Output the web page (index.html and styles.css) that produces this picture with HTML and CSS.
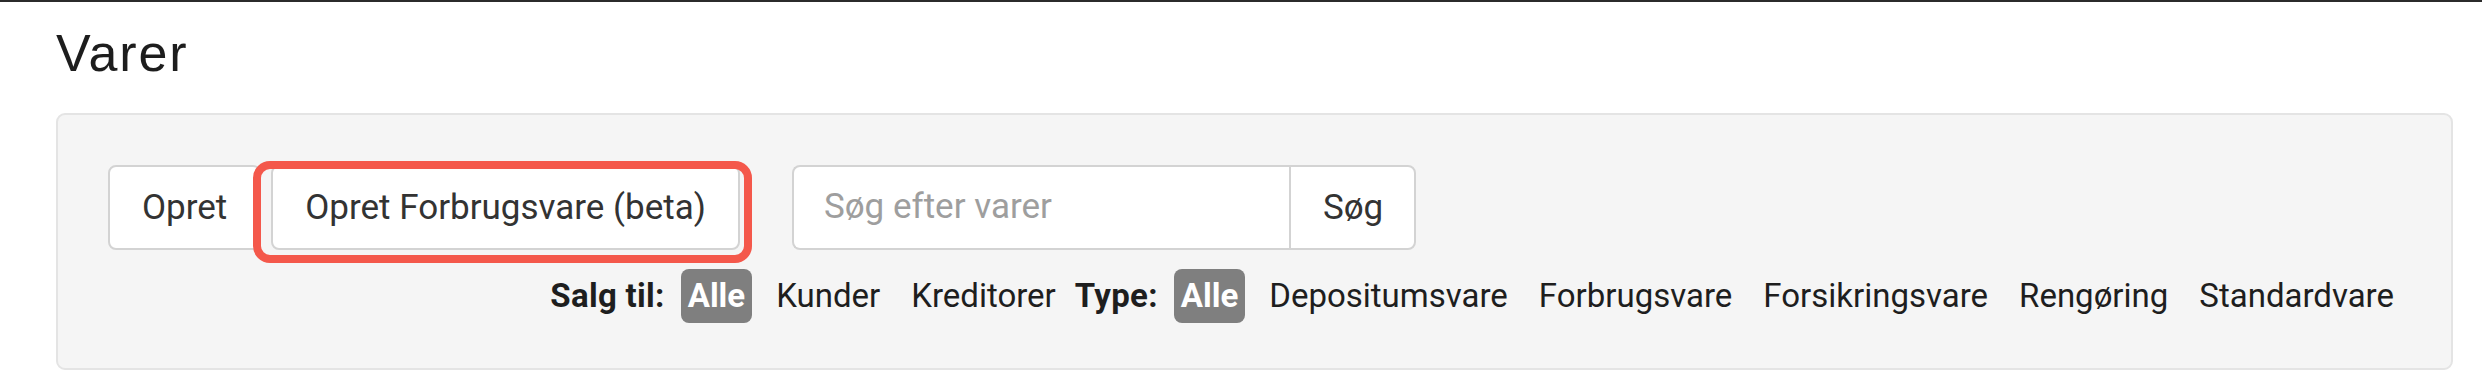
FILE: index.html
```html
<!DOCTYPE html>
<html lang="da">
<head>
<meta charset="utf-8">
<title>Varer</title>
<link rel="stylesheet" href="styles.css">
</head>
<body>
<div class="topbar"></div>
<main class="page">
  <h1 class="title">Varer</h1>
  <section class="well">
    <div class="toolbar">
      <div class="btn-group">
        <button class="btn">Opret</button>
        <div class="btn-wrap">
          <button class="btn btn-beta">Opret Forbrugsvare (beta)</button>
          <span class="highlight"></span>
        </div>
      </div>
      <form class="search">
        <input class="search-input" type="text" placeholder="Søg efter varer">
        <button class="search-btn" type="button">Søg</button>
      </form>
    </div>
    <div class="filters">
      <div class="fgroup">
        <span class="flabel">Salg til:</span>
        <a class="fitem active">Alle</a>
        <a class="fitem">Kunder</a>
        <a class="fitem">Kreditorer</a>
      </div>
      <div class="fgroup">
        <span class="flabel">Type:</span>
        <a class="fitem active">Alle</a>
        <a class="fitem">Depositumsvare</a>
        <a class="fitem">Forbrugsvare</a>
        <a class="fitem">Forsikringsvare</a>
        <a class="fitem">Rengøring</a>
        <a class="fitem">Standardvare</a>
      </div>
    </div>
  </section>
</main>
</body>
</html>
```
FILE: styles.css
```css
* { box-sizing: border-box; }
html, body { margin: 0; padding: 0; background: #ffffff; }
body { font-family: Roboto, "Liberation Sans", Arial, sans-serif; color: #333; }

.topbar { height: 2px; background: #2b2b2b; }

.page { padding-left: 56px; width: 2453px; }

.title {
  margin: 21px 0 30px 0;
  font-family: "Liberation Sans", Arial, sans-serif;
  font-weight: 400;
  font-size: 52px;
  line-height: 60px;
  letter-spacing: 1.8px;
  color: #1d1d1d;
}

.well {
  background: #f5f5f5;
  border: 2px solid #e4e4e4;
  border-radius: 9px;
  padding: 50px 50px 45px 50px;
}

.toolbar { display: flex; align-items: stretch; height: 85px; }

.btn-group { display: flex; gap: 10px; }
.btn-wrap { position: relative; display: flex; }

.btn {
  font-family: Roboto, sans-serif;
  font-size: 35px;
  line-height: 79px;
  color: #333;
  background: #fff;
  border: 2px solid #d3d3d3;
  border-radius: 8px;
  padding: 0 32px;
  height: 85px;
  margin: 0;
  white-space: nowrap;
}

.highlight {
  position: absolute;
  left: -18px;
  right: -12px;
  top: -4px;
  bottom: -13px;
  border: 8px solid #f4584b;
  border-radius: 17px;
  pointer-events: none;
}

.search { display: flex; margin: 0 0 0 52px; }
.search-input {
  width: 497px;
  height: 85px;
  font-family: Roboto, sans-serif;
  font-size: 35px;
  color: #333;
  background: #fff;
  border: 2px solid #d3d3d3;
  border-right: none;
  border-radius: 8px 0 0 8px;
  padding: 0 0 2px 30px;
  outline: none;
}
.search-input::placeholder { color: #9e9e9e; }
.search-btn {
  font-family: Roboto, sans-serif;
  font-size: 35px;
  line-height: 79px;
  color: #333;
  background: #fff;
  border: 2px solid #d3d3d3;
  border-radius: 0 8px 8px 0;
  padding: 0 31px 0 32px;
  height: 85px;
  margin: 0;
}

.filters {
  display: flex;
  justify-content: flex-end;
  margin-top: 19px;
  height: 54px;
  font-family: Roboto, sans-serif;
  font-size: 33px;
  line-height: 54px;
  color: #1e1e1e;
}
.fgroup { display: flex; align-items: center; }
.fgroup + .fgroup { margin-left: 12px; }
.flabel { font-weight: 700; margin-right: 16px; white-space: nowrap; letter-spacing: 0.3px; }
.fitem {
  display: block;
  padding: 0 7px;
  white-space: nowrap;
  border-radius: 8px;
  color: #1e1e1e;
}
.fitem + .fitem { margin-left: 17px; }
.fitem.active {
  background: #7f7f7f;
  color: #fff;
  font-weight: 700;
}
```
